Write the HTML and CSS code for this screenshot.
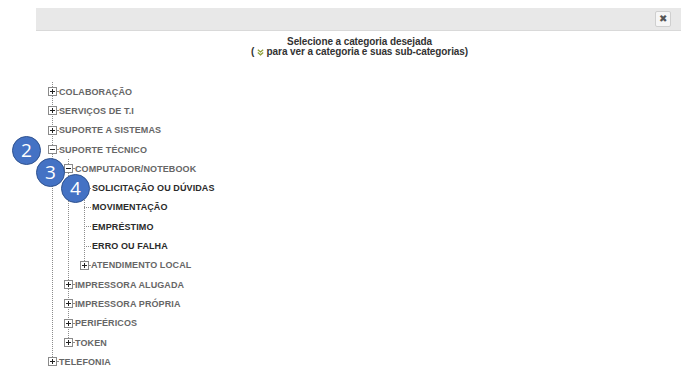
FILE: index.html
```html
<!DOCTYPE html>
<html>
<head>
<meta charset="utf-8">
<link rel="stylesheet" href="styles.css">
</head>
<body>
<div class="page">
  <div class="bar">
    <span class="close">&#10006;</span>
  </div>
  <div class="title">
    <div>Selecione a categoria desejada</div>
    <div>( <svg class="chev" width="7" height="7" viewBox="0 0 7 7"><path d="M0.8 0.8 L3.5 3 L6.2 0.8 M0.8 3.6 L3.5 5.8 L6.2 3.6" fill="none" stroke="#8fa03a" stroke-width="1.3"/></svg> para ver a categoria e suas sub-categorias)</div>
  </div>
  <ul class="tree root">
    <li><div class="row"><span class="box plus"></span><span class="dash"></span><span class="label">COLABORAÇÃO</span></div></li>
    <li><div class="row"><span class="box plus"></span><span class="dash"></span><span class="label">SERVIÇOS DE T.I</span></div></li>
    <li><div class="row"><span class="box plus"></span><span class="dash"></span><span class="label">SUPORTE A SISTEMAS</span></div></li>
    <li><div class="row"><span class="box minus"></span><span class="dash"></span><span class="label">SUPORTE TÉCNICO</span></div>
      <ul class="tree sub">
        <li><div class="row"><span class="box minus"></span><span class="dash"></span><span class="label">COMPUTADOR/NOTEBOOK</span></div>
          <ul class="tree sub short">
            <li><div class="row"><span class="leaf"></span><span class="label dark">SOLICITAÇÃO OU DÚVIDAS</span></div></li>
            <li><div class="row"><span class="leaf"></span><span class="label dark">MOVIMENTAÇÃO</span></div></li>
            <li><div class="row"><span class="leaf"></span><span class="label dark">EMPRÉSTIMO</span></div></li>
            <li><div class="row"><span class="leaf"></span><span class="label dark">ERRO OU FALHA</span></div></li>
            <li><div class="row"><span class="box plus"></span><span class="dash"></span><span class="label">ATENDIMENTO LOCAL</span></div></li>
          </ul>
        </li>
        <li><div class="row"><span class="box plus"></span><span class="dash"></span><span class="label">IMPRESSORA ALUGADA</span></div></li>
        <li><div class="row"><span class="box plus"></span><span class="dash"></span><span class="label">IMPRESSORA PRÓPRIA</span></div></li>
        <li><div class="row"><span class="box plus"></span><span class="dash"></span><span class="label">PERIFÉRICOS</span></div></li>
        <li><div class="row"><span class="box plus"></span><span class="dash"></span><span class="label">TOKEN</span></div></li>
      </ul>
    </li>
    <li><div class="row"><span class="box plus"></span><span class="dash"></span><span class="label">TELEFONIA</span></div></li>
  </ul>
  <span class="badge b2">2</span>
  <span class="badge b3">3</span>
  <span class="badge b4">4</span>
</div>
</body>
</html>
```

FILE: styles.css
```css
html, body {
  margin: 0;
  padding: 0;
  background: #fff;
}
.page {
  position: relative;
  width: 683px;
  height: 375px;
  overflow: hidden;
  font-family: "Liberation Sans", Arial, sans-serif;
  padding-top: 8px;
  box-sizing: border-box;
}
.bar {
  margin-left: 36px;
  width: 645px;
  height: 23px;
  background: #e8e8e8;
  border-bottom: 1px solid #d9d9d9;
  display: flex;
  justify-content: flex-end;
  align-items: center;
  box-sizing: border-box;
  padding-right: 10px;
}
.close {
  width: 16px;
  height: 16px;
  box-sizing: border-box;
  border: 1px solid #cfcfcf;
  border-radius: 2px;
  background: #f6f6f6;
  color: #555;
  font-size: 10px;
  line-height: 14px;
  text-align: center;
}
.title {
  margin-top: 6px;
  text-align: center;
  font-weight: bold;
  font-size: 10px;
  line-height: 10px;
  color: #333;
  padding-left: 36px;
  letter-spacing: -0.1px;
}
.chev {
  vertical-align: -0.5px;
}
ul.tree {
  list-style: none;
  margin: 0;
  padding: 0;
  background-image: repeating-linear-gradient(to bottom, #8c8c8c 0 1px, transparent 1px 2px);
  background-repeat: no-repeat;
  background-position: 4px 0;
  background-size: 1px calc(100% - 12px);
}
ul.root {
  margin-left: 48px;
  margin-top: 25px;
  width: 300px;
}
ul.sub {
  margin-left: 16px;
  background-size: 1px calc(100% - 14px);
}
ul.sub.short {
  background-size: 1px calc(100% - 12px);
}
.row {
  height: 19.3px;
  display: flex;
  align-items: center;
}
.box {
  width: 9px;
  height: 9px;
  box-sizing: border-box;
  border: 1px solid #8a8a8a;
  background: #fff;
  position: relative;
  flex: none;
}
.box::before {
  content: "";
  position: absolute;
  left: 1px;
  top: 3px;
  width: 5px;
  height: 1px;
  background: #222;
}
.box.plus::after {
  content: "";
  position: absolute;
  left: 3px;
  top: 1px;
  width: 1px;
  height: 5px;
  background: #222;
}
.dash {
  width: 2px;
  height: 1px;
  background: #8c8c8c;
  flex: none;
}
.leaf {
  width: 12px;
  height: 1px;
  flex: none;
  background: repeating-linear-gradient(to right, #8c8c8c 0 1px, transparent 1px 2px);
  background-position: 4px 0;
  background-repeat: no-repeat;
  background-size: 8px 1px;
}
.label {
  font-size: 9px;
  font-weight: bold;
  color: #666;
  white-space: nowrap;
  letter-spacing: 0.1px;
}
.label.dark {
  color: #2a2a2a;
}
.badge {
  position: absolute;
  width: 29px;
  height: 29px;
  border-radius: 50%;
  box-sizing: border-box;
  background: #4472c4;
  border: 1px solid #2f528f;
  color: #fff;
  font-family: "Open Sans", "Liberation Sans", sans-serif;
  font-size: 19px;
  line-height: 27px;
  text-align: center;
}
.b2 { left: 12px; top: 136px; }
.b3 { left: 36px; top: 158px; }
.b4 { left: 61px; top: 174px; }
```
